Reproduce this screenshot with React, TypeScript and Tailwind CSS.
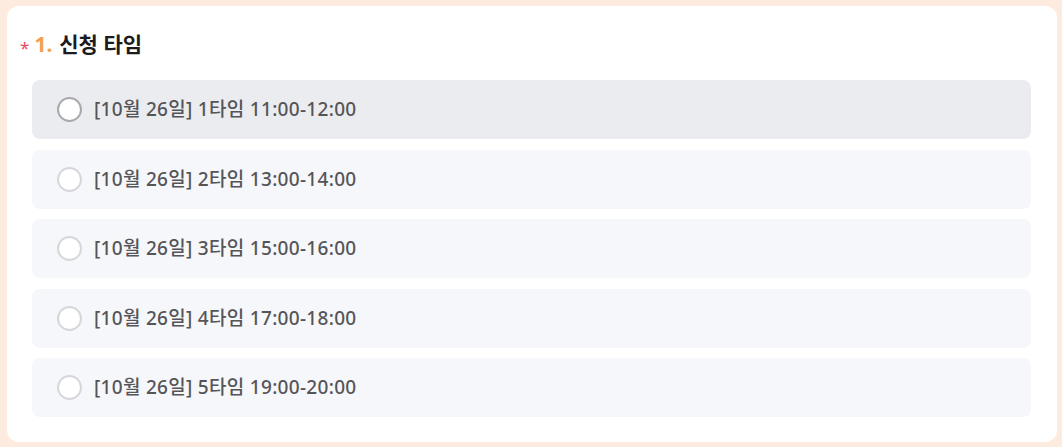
const slots = [
  '[10월 26일] 1타임 11:00-12:00',
  '[10월 26일] 2타임 13:00-14:00',
  '[10월 26일] 3타임 15:00-16:00',
  '[10월 26일] 4타임 17:00-18:00',
  '[10월 26일] 5타임 19:00-20:00',
];

const App = () => {
  const hovered = 0;
  return (
    <div
      className="w-[1062px] h-[447px] bg-[#fdebdf] pt-[6px] pl-[7px] pr-[5px] pb-[5px]"
      style={{ fontFamily: '"Noto Sans", "Noto Sans CJK KR", sans-serif' }}
    >
      <div className="h-full bg-white rounded-[12px] pl-[13px] pr-[26px]">
        <div className="flex items-center h-[74px] pt-[4px]">
          <span className="text-[#e84a5f] text-[17px] mt-[6px] mr-[5px]">*</span>
          <span className="text-[21px] font-bold text-[#f2a14f] mr-[7px]">1.</span>
          <span className="text-[21px] font-bold text-[#1c1c1e]">신청 타임</span>
        </div>
        <div className="flex flex-col gap-[10.5px] pl-[12px]">
          {slots.map((slot, i) => (
            <label
              key={i}
              className={`flex items-center h-[59px] rounded-[8px] pl-[25px] gap-[12px] cursor-pointer ${
                i === hovered ? 'bg-[#ebecf0]' : 'bg-[#f6f7fb]'
              }`}
            >
              <span
                className={`size-[25px] rounded-full border-2 bg-white ${
                  i === hovered ? 'border-[#a9a9ad]' : 'border-[#d6d7db]'
                }`}
              />
              <span className="text-[19px] font-medium tracking-[0.3px] text-[#555558]">{slot}</span>
            </label>
          ))}
        </div>
      </div>
    </div>
  );
};

export default App;
